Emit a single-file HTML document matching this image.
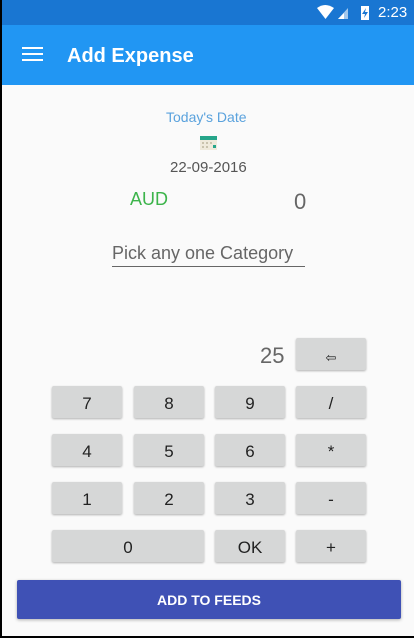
<!DOCTYPE html>
<html><head><style>
*{margin:0;padding:0;box-sizing:border-box}
body{width:414px;height:638px;background:#000;font-family:"Liberation Sans",Roboto,sans-serif;overflow:hidden;position:relative}
.page{position:absolute;left:2px;top:0;width:412px;height:636px;background:#fafafa}
.sb{position:absolute;left:0;top:0;width:412px;height:25px;background:#1976d2}
.ab{position:absolute;left:0;top:25px;width:412px;height:60px;background:#2196f3}
.t{position:absolute;white-space:nowrap}
.b{position:absolute;background:#d6d7d7;border-radius:2px;box-shadow:0 1px 2px rgba(0,0,0,.3);font-size:17px;color:#222;text-align:center;line-height:36px;height:32px;width:70px}
</style></head><body><div class="page">
<div class="sb">
<svg style="position:absolute;left:314px;top:4px" width="60" height="17"><path d="M1 4 Q9 -2 18 4 L9.5 15Z" fill="#fff"/><path d="M22 15 L32 4 L32 15Z" fill="#fff" opacity=".6"/><path d="M22 15 L28 9 L28 15Z" fill="#fff"/><rect x="45" y="2" width="8" height="14" fill="#fff"/><path d="M50 4 L46 10 L49 10 L48 14 L52 8 L49 8Z" fill="#1976d2"/></svg>
<div class="t" style="left:376px;top:4px;color:#fff;font-size:15px">2:23</div>
</div>
<div class="ab">
<div style="position:absolute;left:20px;top:22px;width:21px;height:2px;background:#fff;box-shadow:0 6px 0 #fff,0 12px 0 #fff"></div>
<div class="t" style="left:65px;top:20px;color:#fff;font-size:20px;font-weight:bold">Add Expense</div>
</div>
<div class="t" style="left:164px;top:109px;color:#5aa2dd;font-size:14px">Today's Date</div>
<svg style="position:absolute;left:198px;top:133px" width="17" height="17"><rect x="0" y="3" width="17" height="14" fill="#efeadb"/><rect x="0" y="3" width="17" height="4" fill="#26a58a"/><g fill="#c9c3ad"><rect x="2" y="9" width="2" height="2"/><rect x="6" y="9" width="2" height="2"/><rect x="10" y="9" width="2" height="2"/><rect x="2" y="13" width="2" height="2"/><rect x="6" y="13" width="2" height="2"/></g><rect x="13" y="12" width="3" height="3" fill="#26a58a"/></svg>
<div class="t" style="left:168px;top:159px;color:#555;font-size:15px">22-09-2016</div>
<div class="t" style="left:128px;top:189px;color:#3cb44b;font-size:18px">AUD</div>
<div class="t" style="left:292px;top:189px;color:#666;font-size:22px">0</div>
<div class="t" style="left:110px;top:243px;color:#666;font-size:18px">Pick any one Category</div>
<div style="position:absolute;left:110px;top:266px;width:193px;height:1px;background:#666"></div>
<div class="t" style="left:258px;top:343px;color:#666;font-size:22px">25</div>
<div class="b" style="left:294px;top:338px;font-size:13px;line-height:40px">⇦</div>
<div class="b" style="left:50px;top:386px">7</div><div class="b" style="left:132px;top:386px">8</div><div class="b" style="left:213px;top:386px">9</div><div class="b" style="left:294px;top:386px">/</div>
<div class="b" style="left:50px;top:434px">4</div><div class="b" style="left:132px;top:434px">5</div><div class="b" style="left:213px;top:434px">6</div><div class="b" style="left:294px;top:434px">*</div>
<div class="b" style="left:50px;top:482px">1</div><div class="b" style="left:132px;top:482px">2</div><div class="b" style="left:213px;top:482px">3</div><div class="b" style="left:294px;top:482px">-</div>
<div class="b" style="left:50px;top:530px;width:152px">0</div><div class="b" style="left:213px;top:530px">OK</div><div class="b" style="left:294px;top:530px">+</div>
<div style="position:absolute;left:15px;top:580px;width:384px;height:39px;background:#3f51b5;border-radius:2px;box-shadow:0 1px 3px rgba(0,0,0,.3);color:#fff;font-size:14px;font-weight:bold;text-align:center;line-height:41px">ADD TO FEEDS</div>
</div></body></html>
